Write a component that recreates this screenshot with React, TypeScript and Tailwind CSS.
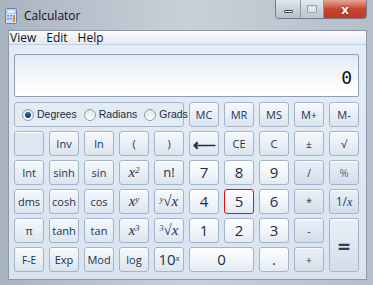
import React from "react";

type Kind = "fn" | "num" | "op" | "blank";

function Key({
  children,
  kind = "fn",
  className = "",
}: {
  children?: React.ReactNode;
  kind?: Kind;
  className?: string;
}) {
  const look =
    kind === "num"
      ? "bg-gradient-to-b from-[#fdfeff] via-[#f2f6fb] to-[#e3eaf3] text-[15px] text-[#1d2c44]"
      : kind === "op"
        ? "bg-gradient-to-b from-[#e9eff6] via-[#dfe7f1] to-[#d3dde9] text-[11px] text-[#2b3d58]"
        : kind === "blank"
          ? "bg-[#dde6f1]"
          : "bg-gradient-to-b from-[#f6f9fc] via-[#e9eff6] to-[#dbe4ef] text-[11px] text-[#1e3050]";
  return (
    <div
      className={`flex items-center justify-center rounded-[3px] border border-[#a4b3c6] shadow-[inset_0_1px_0_#ffffff] leading-none ${look} ${className}`}
    >
      {children}
    </div>
  );
}

function Radio({ label, checked }: { label: string; checked?: boolean }) {
  return (
    <div className="flex items-center gap-[3px]">
      <span className="flex h-[12px] w-[12px] items-center justify-center rounded-full border border-[#8d9bb0] bg-gradient-to-b from-[#dfe5ec] to-[#ffffff]">
        {checked && (
          <span className="h-[6px] w-[6px] rounded-full bg-gradient-to-b from-[#2d6fb8] to-[#0b3b75]" />
        )}
      </span>
      <span>{label}</span>
    </div>
  );
}

const serif = "font-['Liberation_Serif',serif] italic text-[15px]";

export default function App() {
  return (
    <div className="h-[285px] w-[373px] overflow-hidden bg-gradient-to-r from-[#aab4c0] via-[#c9d0d9] to-[#b5bec9] font-['Open_Sans',sans-serif] text-[#1b2a40]">
      {/* Title bar */}
      <div className="flex h-[30px] items-start">
        <div className="mt-[7px] ml-[5px] flex items-center gap-[7px]">
          <svg width="12" height="16" viewBox="0 0 12 16">
            <rect x="0.5" y="0.5" width="11" height="15" rx="1" fill="#cfe3f6" stroke="#5b84b1" />
            <rect x="2" y="2" width="8" height="3" fill="#ffffff" stroke="#7b9cc2" strokeWidth="0.6" />
            <rect x="2" y="7" width="2" height="1.5" fill="#6a8db8" />
            <rect x="5" y="7" width="2" height="1.5" fill="#6a8db8" />
            <rect x="2" y="10" width="2" height="1.5" fill="#6a8db8" />
            <rect x="5" y="10" width="2" height="1.5" fill="#6a8db8" />
            <rect x="8" y="7" width="2" height="7" fill="#e8882a" />
          </svg>
          <span className="text-[12px] text-[#111]">Calculator</span>
        </div>
        <div className="ml-auto mr-[6px] flex h-[19px] overflow-hidden rounded-b-[4px] border border-t-0 border-[#6f7b8a]">
          <div className="flex w-[25px] items-center justify-center border-r border-[#8a95a3] bg-gradient-to-b from-[#e4e9ef] via-[#c9d1db] to-[#b7c1cd]">
            <span className="mt-[4px] h-[3px] w-[9px] rounded-[1px] border border-[#3d4856] bg-white" />
          </div>
          <div className="flex w-[23px] items-center justify-center border-r border-[#8a95a3] bg-gradient-to-b from-[#e4e9ef] via-[#cdd4dd] to-[#bcc5d0]">
            <span className="h-[8px] w-[10px] border border-[#9aa5b3] bg-[#dfe4ea]" />
          </div>
          <div className="flex w-[42px] items-center justify-center bg-gradient-to-b from-[#e8a597] via-[#c9452f] to-[#b83a28]">
            <span className="text-[13px] font-bold leading-none text-white [text-shadow:0_0_2px_#3a1a14]">x</span>
          </div>
        </div>
      </div>

      <div className="mx-[8px] mr-[6px] h-[250px] overflow-hidden border border-[#8d98a6]">
        {/* Menu bar */}
        <div className="flex h-[14px] items-center gap-[10px] border-b border-[#c3cedd] bg-gradient-to-b from-[#fafcfe] to-[#e2e9f3] pl-[1px] text-[12px] text-[#111]">
          <span>View</span>
          <span>Edit</span>
          <span>Help</span>
        </div>

        {/* Body */}
        <div className="h-[236px] bg-gradient-to-b from-[#e4ecf6] to-[#d9e4f1] pl-[5px] pt-[9px]">
          <div className="flex h-[43px] w-[345px] items-end justify-end rounded-[2px] border border-[#8ea0b6] bg-gradient-to-b from-[#e2eaf5] via-[#f3f7fc] to-[#ffffff] pr-[6px] pb-[9px]">
            <span className="font-['DejaVu_Sans_Mono',monospace] text-[18px] leading-none text-[#111]">0</span>
          </div>

          <div className="mt-[5px] grid w-[345px] grid-cols-[repeat(10,30px)] grid-rows-[repeat(6,25px)] gap-x-[5px] gap-y-[4px]">
            <div className="col-span-5 flex items-center gap-[7px] rounded-[3px] border border-[#a6b5c8] bg-[#e3ebf5] pl-[7px] font-['Liberation_Sans',sans-serif] text-[10.5px] text-[#1b2a40]">
              <Radio label="Degrees" checked />
              <Radio label="Radians" />
              <Radio label="Grads" />
            </div>
            <Key>MC</Key>
            <Key>MR</Key>
            <Key>MS</Key>
            <Key>M+</Key>
            <Key>M-</Key>

            <Key kind="blank" />
            <Key>Inv</Key>
            <Key>ln</Key>
            <Key>(</Key>
            <Key>)</Key>
            <Key>
              <span className="text-[16px] font-bold">⟵</span>
            </Key>
            <Key>CE</Key>
            <Key>C</Key>
            <Key>±</Key>
            <Key>√</Key>

            <Key>Int</Key>
            <Key>sinh</Key>
            <Key>sin</Key>
            <Key>
              <span className={serif}>
                x<sup className="text-[9px]">2</sup>
              </span>
            </Key>
            <Key>
              <span className="text-[13px]">n!</span>
            </Key>
            <Key kind="num">7</Key>
            <Key kind="num">8</Key>
            <Key kind="num">9</Key>
            <Key kind="op">/</Key>
            <Key kind="op">
              <span className="text-[#55657a]">%</span>
            </Key>

            <Key>dms</Key>
            <Key>cosh</Key>
            <Key>cos</Key>
            <Key>
              <span className={serif}>
                x<sup className="text-[9px]">y</sup>
              </span>
            </Key>
            <Key>
              <span className={serif}>
                <sup className="text-[8px]">y</sup>√x
              </span>
            </Key>
            <Key kind="num">4</Key>
            <Key kind="num" className="border-[#e01010] shadow-[inset_0_0_0_1px_#e01010]">
              5
            </Key>
            <Key kind="num">6</Key>
            <Key kind="op">*</Key>
            <Key kind="op">
              <span className="text-[12px]">
                1/<span className="font-['Liberation_Serif',serif] italic">x</span>
              </span>
            </Key>

            <Key>π</Key>
            <Key>tanh</Key>
            <Key>tan</Key>
            <Key>
              <span className={serif}>
                x<sup className="text-[9px]">3</sup>
              </span>
            </Key>
            <Key>
              <span className={serif}>
                <sup className="text-[8px]">3</sup>√x
              </span>
            </Key>
            <Key kind="num">1</Key>
            <Key kind="num">2</Key>
            <Key kind="num">3</Key>
            <Key kind="op">-</Key>
            <Key kind="op" className="row-span-2">
              <span className="text-[22px] font-bold">=</span>
            </Key>

            <Key>
              <span className="text-[10px]">F-E</span>
            </Key>
            <Key>Exp</Key>
            <Key>Mod</Key>
            <Key>log</Key>
            <Key>
              <span className="text-[15px]">
                10<sup className="font-['Liberation_Serif',serif] text-[9px] italic">x</sup>
              </span>
            </Key>
            <Key kind="num" className="col-span-2">
              0
            </Key>
            <Key kind="num">.</Key>
            <Key kind="op">+</Key>
          </div>
        </div>
      </div>
    </div>
  );
}
